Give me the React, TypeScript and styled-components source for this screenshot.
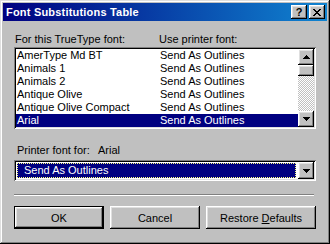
import React from 'react';
import styled, { createGlobalStyle, css } from 'styled-components';

const GlobalStyle = createGlobalStyle`
  html, body {
    margin: 0;
    padding: 0;
    background: #c0c0c0;
  }
  body {
    font-family: "Liberation Sans", Arial, sans-serif;
    font-size: 11px;
    color: #000;
  }
`;

const raised = css`
  box-shadow: inset -1px -1px #000, inset 1px 1px #fff, inset -2px -2px #808080,
    inset 2px 2px #dfdfdf;
`;

const sunken = css`
  box-shadow: inset 1px 1px #808080, inset -1px -1px #fff, inset 2px 2px #000,
    inset -2px -2px #dfdfdf;
`;

const Window = styled.div`
  width: 330px;
  height: 244px;
  box-sizing: border-box;
  padding: 3px;
  background: #c0c0c0;
  box-shadow: inset -1px -1px #000, inset 1px 1px #dfdfdf, inset -2px -2px #808080,
    inset 2px 2px #fff;
  display: flex;
  flex-direction: column;
`;

const TitleBar = styled.div`
  height: 18px;
  flex-shrink: 0;
  display: flex;
  align-items: center;
  justify-content: space-between;
  padding: 0 2px 0 3px;
  background: linear-gradient(90deg, #000080, #1084d0);
  color: #fff;
  font-weight: bold;
  font-size: 11px;
`;

const TitleText = styled.span`
  letter-spacing: 0.2px;
`;

const TitleButtons = styled.div`
  display: flex;
  gap: 2px;
`;

const TitleButton = styled.div`
  width: 16px;
  height: 14px;
  box-sizing: border-box;
  background: #c0c0c0;
  ${raised}
  display: flex;
  align-items: center;
  justify-content: center;
  color: #000;
  font-size: 11px;
  font-weight: bold;
  line-height: 14px;
`;

const Body = styled.div`
  padding: 12px 11px 0 11px;
  display: flex;
  flex-direction: column;
`;

const HeaderRow = styled.div`
  display: grid;
  grid-template-columns: 144px 1fr;
  height: 13px;
  line-height: 13px;
  padding-left: 1px;
`;

const ListBox = styled.div`
  margin-top: 1px;
  height: 82px;
  box-sizing: border-box;
  padding: 2px;
  background: #fff;
  ${sunken}
  display: flex;
`;

const Rows = styled.div`
  flex: 1;
  display: flex;
  flex-direction: column;
`;

const Row = styled.div<{ $selected?: boolean }>`
  display: grid;
  grid-template-columns: 143px 1fr;
  height: 13px;
  line-height: 13px;
  padding-left: 1px;
  white-space: nowrap;
  background: ${(p) => (p.$selected ? '#000080' : 'transparent')};
  color: ${(p) => (p.$selected ? '#fff' : '#000')};
`;

const ScrollBar = styled.div`
  width: 16px;
  display: flex;
  flex-direction: column;
`;

const ArrowButton = styled.div<{ $height?: number }>`
  width: 16px;
  height: ${(p) => p.$height ?? 16}px;
  flex-shrink: 0;
  box-sizing: border-box;
  background: #c0c0c0;
  ${raised}
  display: flex;
  align-items: center;
  justify-content: center;
`;

const Thumb = styled.div`
  width: 16px;
  height: 11px;
  box-sizing: border-box;
  background: #c0c0c0;
  ${raised}
`;

const Track = styled.div`
  flex: 1;
  background-image: conic-gradient(#c0c0c0 25%, #fff 0 50%, #c0c0c0 0 75%, #fff 0);
  background-size: 2px 2px;
`;

const PrinterLabel = styled.div`
  margin-top: 15px;
  height: 13px;
  line-height: 13px;
  padding-left: 3px;
  display: flex;
`;

const LabelCaption = styled.span`
  flex-shrink: 0;
  width: 81px;
`;

const Combo = styled.div`
  margin-top: 3px;
  height: 21px;
  box-sizing: border-box;
  padding: 2px;
  background: #fff;
  ${sunken}
  display: flex;
`;

const ComboField = styled.div`
  flex: 1;
  margin: 1px 2px 1px 1px;
  background: #000080;
  color: #fff;
  outline: 1px dotted #ffff7f;
  outline-offset: -1px;
  padding-left: 7px;
  line-height: 15px;
`;

const Separator = styled.div`
  margin-top: 13px;
  margin-right: 2px;
  border-top: 1px solid #808080;
  border-bottom: 1px solid #fff;
`;

const ButtonRow = styled.div`
  margin-top: 10px;
  display: flex;
  gap: 6px;
`;

const Button = styled.div<{ $width: number; $default?: boolean }>`
  width: ${(p) => p.$width}px;
  height: 23px;
  box-sizing: border-box;
  background: #c0c0c0;
  ${raised}
  border: ${(p) => (p.$default ? '1px solid #000' : 'none')};
  display: flex;
  align-items: center;
  justify-content: center;
  padding-top: 1px;
`;

const Mnemonic = styled.span`
  text-decoration: underline;
`;

const Arrow = ({ up }: { up?: boolean }) => {
  const rows = [7, 5, 3, 1];
  const order = up ? [...rows].reverse() : rows;
  return (
    <svg width="7" height="4" viewBox="0 0 7 4" shapeRendering="crispEdges">
      {order.map((w, i) => (
        <rect key={i} x={(7 - w) / 2} y={i} width={w} height={1} fill="#000" />
      ))}
    </svg>
  );
};

const CloseGlyph = () => {
  const rows = ['XX....XX', '.XX..XX.', '..XXXX..', '...XX...', '..XXXX..', '.XX..XX.', 'XX....XX'];
  return (
    <svg width="8" height="7" viewBox="0 0 8 7" shapeRendering="crispEdges">
      {rows.map((r, y) =>
        r.split('').map((c, x) =>
          c === 'X' ? <rect key={`${x}_${y}`} x={x} y={y} width={1} height={1} fill="#000" /> : null
        )
      )}
    </svg>
  );
};

const fonts = [
  'AmerType Md BT',
  'Animals 1',
  'Animals 2',
  'Antique Olive',
  'Antique Olive Compact',
  'Arial',
];

const App = () => {
  return (
    <>
      <GlobalStyle />
      <Window>
        <TitleBar>
          <TitleText>Font Substitutions Table</TitleText>
          <TitleButtons>
            <TitleButton>?</TitleButton>
            <TitleButton>
              <CloseGlyph />
            </TitleButton>
          </TitleButtons>
        </TitleBar>
        <Body>
          <HeaderRow>
            <span>For this TrueType font:</span>
            <span>Use printer font:</span>
          </HeaderRow>
          <ListBox>
            <Rows>
              {fonts.map((name) => (
                <Row key={name} $selected={name === 'Arial'}>
                  <span>{name}</span>
                  <span>Send As Outlines</span>
                </Row>
              ))}
            </Rows>
            <ScrollBar>
              <ArrowButton>
                <Arrow up />
              </ArrowButton>
              <Thumb />
              <Track />
              <ArrowButton>
                <Arrow />
              </ArrowButton>
            </ScrollBar>
          </ListBox>
          <PrinterLabel>
            <LabelCaption>Printer font for:</LabelCaption>
            <span>Arial</span>
          </PrinterLabel>
          <Combo>
            <ComboField>Send As Outlines</ComboField>
            <ArrowButton $height={17}>
              <Arrow />
            </ArrowButton>
          </Combo>
          <Separator />
          <ButtonRow>
            <Button $width={90} $default>
              OK
            </Button>
            <Button $width={90}>Cancel</Button>
            <Button $width={110}>
              Restore&nbsp;<Mnemonic>D</Mnemonic>efaults
            </Button>
          </ButtonRow>
        </Body>
      </Window>
    </>
  );
};

export default App;
